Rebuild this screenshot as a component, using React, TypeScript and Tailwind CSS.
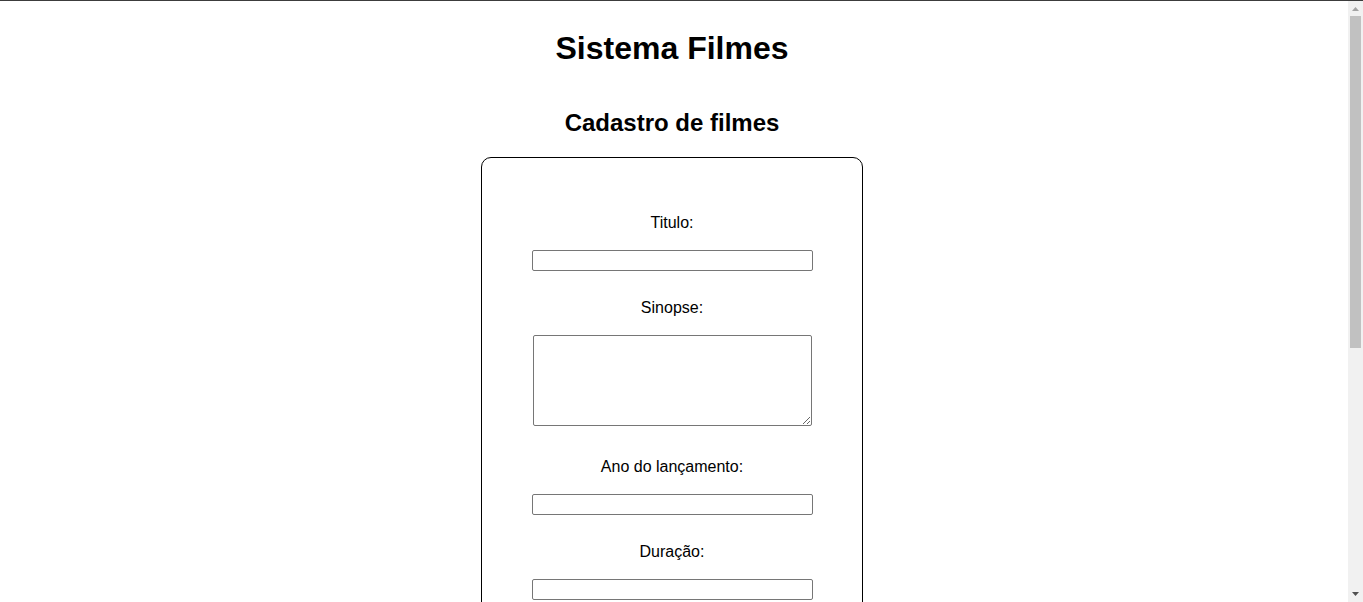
import React from 'react';

const fieldClass = 'block w-[281px] h-[21px] mt-[18px] px-[2px] border border-[#767676] rounded-[2px] bg-white text-[13px] outline-none';

const App: React.FC = () => {
  const extras = ['Gênero:', 'Diretor:', 'Classificação:'];

  return (
    <div className="h-screen flex flex-col bg-white text-black border-t border-[#3c3c3c] font-['Liberation_Sans',Arial,sans-serif]">
      <div className="flex flex-1 min-h-0">
        {/* page content */}
        <div className="flex-1 min-w-0 overflow-hidden">
          <div className="flex flex-col items-center pr-1">
            <h1 className="mt-[29px] text-[32px] leading-[37px] font-bold">Sistema Filmes</h1>
            <h2 className="mt-[42px] text-[24px] leading-[28px] font-bold">Cadastro de filmes</h2>

            <form
              onSubmit={(e) => e.preventDefault()}
              className="mt-[20px] w-[382px] border border-black rounded-[10px] flex flex-col items-center pt-[56px] pb-[56px]"
            >
              <label className="block text-[16px] leading-[18px] text-center">Titulo:</label>
              <input name="titulo" className={fieldClass} />

              <label className="block mt-[28px] text-[16px] leading-[18px] text-center">Sinopse:</label>
              <textarea
                name="sinopse"
                className="block w-[279px] h-[91px] mt-[18px] px-[2px] border border-[#767676] rounded-[2px] bg-white text-[13px] outline-none"
              />

              <label className="block mt-[32px] text-[16px] leading-[18px] text-center">Ano do lançamento:</label>
              <input name="ano" className={fieldClass} />

              <label className="block mt-[28px] text-[16px] leading-[18px] text-center">Duração:</label>
              <input name="duracao" className={fieldClass} />

              {extras.map((label) => (
                <React.Fragment key={label}>
                  <label className="block mt-[28px] text-[16px] leading-[18px] text-center">{label}</label>
                  <input className={fieldClass} />
                </React.Fragment>
              ))}

              <button
                type="submit"
                className="mt-[30px] px-[6px] py-[1px] border border-[#767676] rounded-[2px] bg-[#efefef] text-[13px]"
              >
                Cadastrar
              </button>
            </form>
          </div>
        </div>

        {/* scrollbar */}
        <div className="w-[15px] shrink-0 bg-[#f1f1f1] flex flex-col items-center">
          <svg width="7" height="4" viewBox="0 0 7 4" className="mt-[6px]">
            <polygon points="0,4 3.5,0 7,4" fill="#a3a3a3" />
          </svg>
          <div className="mt-[5px] w-[11px] h-[332px] bg-[#c1c1c1]" />
          <div className="flex-1" />
          <svg width="7" height="4" viewBox="0 0 7 4" className="mb-[6px]">
            <polygon points="0,0 7,0 3.5,4" fill="#505050" />
          </svg>
        </div>
      </div>
    </div>
  );
};

export default App;
